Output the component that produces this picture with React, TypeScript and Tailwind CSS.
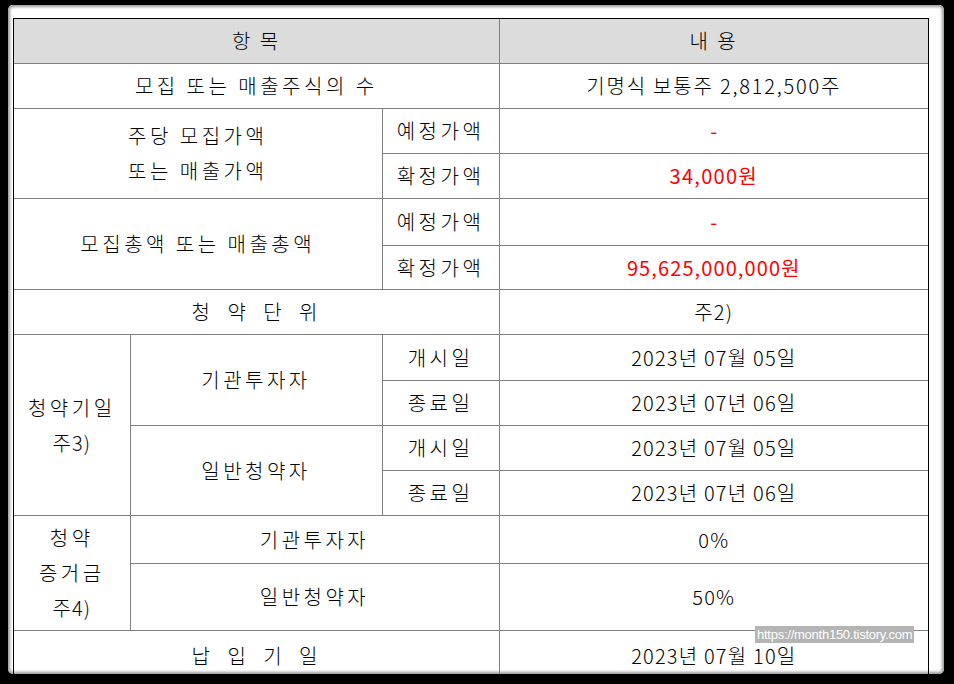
import React from "react";

const line = "border border-[#808080]";

function Cell({
  children,
  className = "",
  colSpan,
  rowSpan,
}: {
  children?: React.ReactNode;
  className?: string;
  colSpan?: number;
  rowSpan?: number;
}) {
  return (
    <td
      colSpan={colSpan}
      rowSpan={rowSpan}
      className={`${line} p-0 text-center align-middle leading-[35px] ${className}`}
    >
      {children}
    </td>
  );
}

// 한글 라벨용 자간
const ko = "tracking-[3.5px]";
const spaced = "tracking-[3.5px] [word-spacing:6px]";
const num = "tracking-[1.2px]";
const red = "font-normal text-[#ff0000]";

export default function App() {
  return (
    <div className="h-[684px] w-[954px] overflow-hidden bg-black pb-[10px] pl-[8px] pr-[10px] pt-[5px]">
      <div className="relative h-full w-full overflow-hidden rounded-[5px] bg-white pl-[5px] pr-[16px] pt-[13px] shadow-[inset_0_0_3px_2px_#9a9a9a]">
        <div
          className="w-[916px] border border-black text-[20px] font-light text-black"
          style={{ fontFamily: "'Noto Sans CJK KR', 'Noto Sans', sans-serif" }}
        >
          <table className="w-full table-fixed border-collapse border-hidden">
            <colgroup>
              <col className="w-[116px]" />
              <col className="w-[252px]" />
              <col className="w-[117px]" />
              <col className="w-[429px]" />
            </colgroup>
            <tbody>
              <tr className="h-[44px] bg-[#dcdcdc]">
                <Cell colSpan={3} className="tracking-[2.5px]">항 목</Cell>
                <Cell className="tracking-[2.5px]">내 용</Cell>
              </tr>
              <tr className="h-[45px]">
                <Cell colSpan={3} className={ko}>모집 또는 매출주식의 수</Cell>
                <Cell className="tracking-[1.8px]">기명식 보통주 2,812,500주</Cell>
              </tr>
              <tr className="h-[45px]">
                <Cell colSpan={2} rowSpan={2} className={ko}>
                  주당 모집가액
                  <br />
                  또는 매출가액
                </Cell>
                <Cell className={ko}>예정가액</Cell>
                <Cell className={red}>-</Cell>
              </tr>
              <tr className="h-[45px]">
                <Cell className={ko}>확정가액</Cell>
                <Cell className={`tracking-[1.3px] ${red}`}>34,000원</Cell>
              </tr>
              <tr className="h-[47px]">
                <Cell colSpan={2} rowSpan={2} className={ko}>
                  모집총액 또는 매출총액
                </Cell>
                <Cell className={ko}>예정가액</Cell>
                <Cell className={red}>-</Cell>
              </tr>
              <tr className="h-[44px]">
                <Cell className={ko}>확정가액</Cell>
                <Cell className={`tracking-[1.1px] ${red}`}>95,625,000,000원</Cell>
              </tr>
              <tr className="h-[45px]">
                <Cell colSpan={3} className={spaced}>청 약 단 위</Cell>
                <Cell className={num}>주2)</Cell>
              </tr>
              <tr className="h-[46px]">
                <Cell rowSpan={4} className={ko}>
                  청약기일
                  <br />
                  <span className="tracking-[1px]">주3)</span>
                </Cell>
                <Cell rowSpan={2} className={ko}>기관투자자</Cell>
                <Cell className={ko}>개시일</Cell>
                <Cell className={num}>2023년 07월 05일</Cell>
              </tr>
              <tr className="h-[45px]">
                <Cell className={ko}>종료일</Cell>
                <Cell className={num}>2023년 07년 06일</Cell>
              </tr>
              <tr className="h-[45px]">
                <Cell rowSpan={2} className={ko}>일반청약자</Cell>
                <Cell className={ko}>개시일</Cell>
                <Cell className={num}>2023년 07월 05일</Cell>
              </tr>
              <tr className="h-[45px]">
                <Cell className={ko}>종료일</Cell>
                <Cell className={num}>2023년 07년 06일</Cell>
              </tr>
              <tr className="h-[48px]">
                <Cell rowSpan={2} className={`leading-[34px] ${ko}`}>
                  청약
                  <br />
                  증거금
                  <br />
                  <span className="tracking-[1px]">주4)</span>
                </Cell>
                <Cell colSpan={2} className={ko}>기관투자자</Cell>
                <Cell className={num}>0%</Cell>
              </tr>
              <tr className="h-[67px]">
                <Cell colSpan={2} className={ko}>일반청약자</Cell>
                <Cell className={num}>50%</Cell>
              </tr>
              <tr className="h-[50px]">
                <Cell colSpan={3} className={spaced}>납 입 기 일</Cell>
                <Cell className={num}>2023년 07월 10일</Cell>
              </tr>
            </tbody>
          </table>
        </div>

        <div
          className="absolute left-[747px] top-[621px] bg-[#b4b4b4] px-[2px] text-[13px] leading-[17px] tracking-[-0.25px] text-white"
          style={{ fontFamily: "'Liberation Sans', Arial, sans-serif" }}
        >
          https://month150.tistory.com
        </div>
      </div>
    </div>
  );
}
